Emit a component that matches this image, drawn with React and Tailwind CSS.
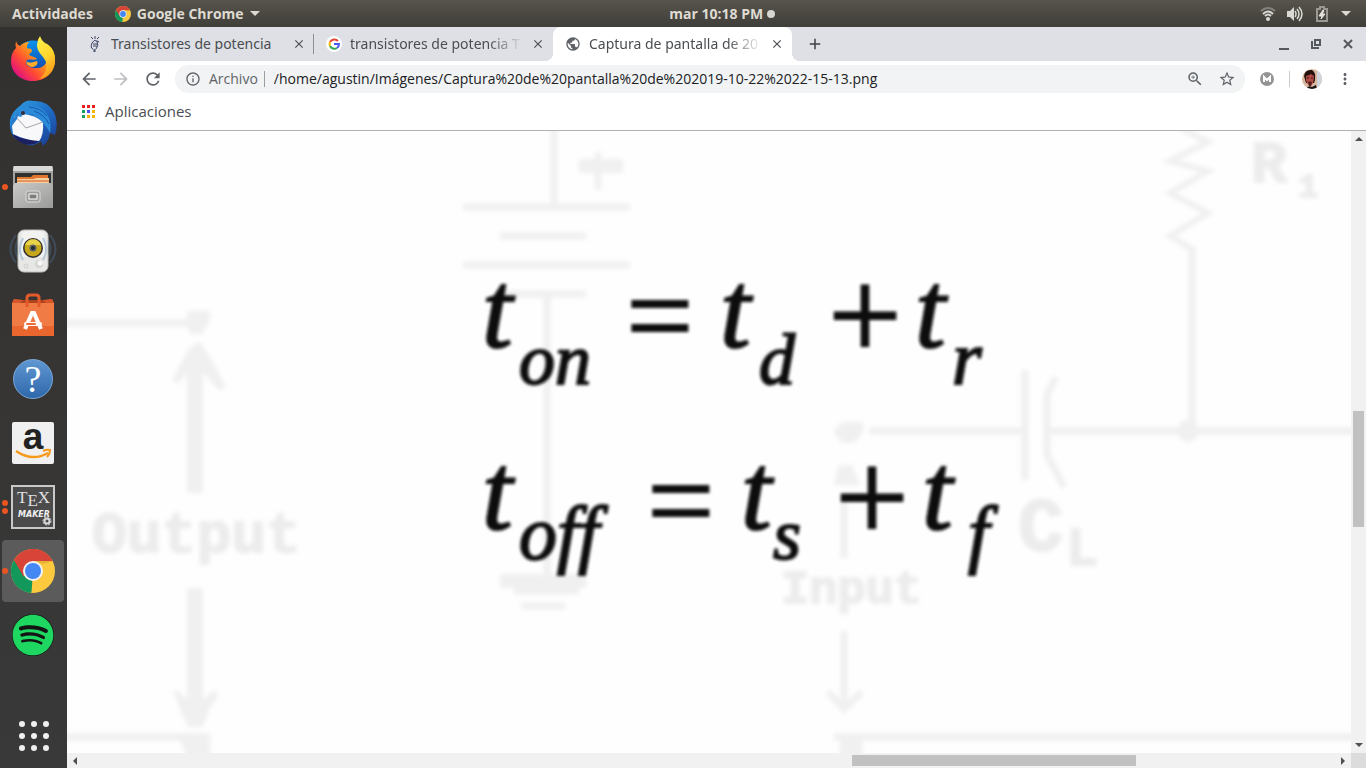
import React from 'react';
import {
  MdArrowBack,
  MdArrowForward,
  MdRefresh,
  MdInfoOutline,
  MdStarBorder,
  MdZoomIn,
  MdMoreVert,
  MdPublic,
  MdClose,
  MdAdd,
} from 'react-icons/md';
import { FaSpotify } from 'react-icons/fa';

function ChromeLogo({ className }) {
  return (
    <svg viewBox="0 0 44 44" className={className} aria-hidden="true">
      <circle cx="22" cy="22" r="22" fill="#fdc93e" />
      <path d="M22 22 L2.9 11 A22 22 0 0 0 20 43.9 L31 27Z" fill="#13985b" />
      <path d="M22 22 L12.5 27.5 L2.9 11 A22 22 0 0 1 41.7 12 L22 12Z" fill="#d84437" />
      <path d="M22 12 H41.7 L32 15Z" fill="#c9a02c" opacity=".5" />
      <path d="M22 22 L31.5 27 L20.5 44 Z" fill="#fdc93e" />
      <circle cx="22" cy="22" r="10" fill="#f3f3f3" />
      <circle cx="22" cy="22" r="8" fill="#4587f3" />
    </svg>
  );
}

function FirefoxLogo() {
  return (
    <svg viewBox="0 0 46 48" className="h-12 w-[46px]" aria-hidden="true">
      <defs>
        <linearGradient id="ffBody" x1="0.9" y1="0.1" x2="0.1" y2="0.8">
          <stop offset="0" stopColor="#ffdf2e" />
          <stop offset=".4" stopColor="#ff9a1c" />
          <stop offset=".7" stopColor="#ff4a33" />
          <stop offset="1" stopColor="#e3147f" />
        </linearGradient>
        <linearGradient id="ffGlobe" x1="0.4" y1="0" x2="0.5" y2="1">
          <stop offset="0" stopColor="#0a94f0" />
          <stop offset="1" stopColor="#133a9c" />
        </linearGradient>
        <linearGradient id="ffTail" x1="0" y1="0" x2="0.4" y2="1">
          <stop offset="0" stopColor="#fff44f" />
          <stop offset=".6" stopColor="#ffd62c" />
          <stop offset="1" stopColor="#ff9d1c" />
        </linearGradient>
      </defs>
      <circle cx="23" cy="24" r="18.500" fill="url(#ffGlobe)" />
      <path d="M6 6 Q5 10 6 13 Q1 18 1 26 C1 38 11 46 23 46 C36 46 45 37 45 25 C45 17 42 12 37 9 C40 20 38 32 28 33 C20 34 15 30 16 26 C19 23 23 26 27 24 C25 21 20 22 19 19 C23 17 22 15 21 14 C19 13 18 14 17 13 Q17 9 19 7 C15 7 12 9 10 11 Q7 10 6 6Z" fill="url(#ffBody)" />
      <path d="M30 1 Q32 7 37 9 Q45 15 45 25 C45 36 37 43 29 44 C36 39 38 32 36 27 C34 21 27 18 27 10 Q27 5 30 1Z" fill="url(#ffTail)" />
      <path d="M16 26 C20 29 23 27 27 26 Q29 30 23 32 Q17 32 16 26Z" fill="#ffab2b" />
    </svg>
  );
}

function ThunderbirdLogo() {
  return (
    <svg viewBox="0 0 48 48" className="h-12 w-12" aria-hidden="true">
      <defs>
        <linearGradient id="tbBlue" x1="0.1" y1="0" x2="0.8" y2="1">
          <stop offset="0" stopColor="#2f9fe0" />
          <stop offset=".45" stopColor="#1f6fc8" />
          <stop offset="1" stopColor="#1b3f96" />
        </linearGradient>
      </defs>
      <path d="M12 6 Q17 0 24 2 Q38 1 45 13 Q50 24 46 36 L41 34 Q40 42 34 47 L32 42 Q27 47 19 46 Q9 43 4 37 Q0 30 1 21 Q3 12 12 6Z" fill="url(#tbBlue)" />
      <path d="M3 35 L12 39 L30 42 Q24 47 15 45 Q7 42 3 35Z" fill="#1c1f60" />
      <path d="M6 17 L14 15 Q26 16 34 23 Q35 36 30 42 Q16 41 4 35 L3 27Z" fill="#f8f8fb" />
      <path d="M7 18 L17 29 L34 23" fill="none" stroke="#a4a4ac" strokeWidth="1" />
      <path d="M8 17 Q10 4 22 3 Q18 4 17 7 Q31 5 38 15 Q43 23 41 34 Q35 22 23 15 Q15 13 12 18Z" fill="#2c8bd9" />
      <path d="M20 8 Q32 9 38 17 M25 12 Q36 16 40 25" fill="none" stroke="#1557a8" strokeWidth="1" />
      <path d="M3 27 Q3 19 10 13 L8 20Z" fill="#2a7bd0" />
      <circle cx="14" cy="14" r="2" fill="#342c3d" />
    </svg>
  );
}

function FilesLogo() {
  return (
    <svg viewBox="0 0 42 44" className="h-11 w-[42px]" aria-hidden="true">
      <defs>
        <linearGradient id="cabinet" x1="0" y1="0" x2="1" y2="1">
          <stop offset="0" stopColor="#cacac8" />
          <stop offset="1" stopColor="#9a9a98" />
        </linearGradient>
      </defs>
      <path d="M1 2 Q1 1 3 1 H39 Q41 1 41 2 V43 H1Z" fill="#a2a29f" />
      <path d="M2 1 H40 L41 6 H1Z" fill="#d9d9d7" />
      <rect x="3" y="8" width="36" height="11" fill="#30302e" />
      <path d="M5 12 H19 L21 10 H36 V18 H5Z" fill="#e0762e" />
      <path d="M5 14 H22 L24 13 H37 V18 H5Z" fill="#f7cf9f" />
      <path d="M5 16 H37" stroke="#d35b20" strokeWidth="1" />
      <path d="M3 18 H39 L41 21 V42 Q41 43 39 43 H3 Q1 43 1 42 V21Z" fill="url(#cabinet)" />
      <rect x="14" y="26" width="14" height="11" rx="2" fill="#9d9d9b" stroke="#dcdcda" strokeWidth="1" />
      <rect x="17" y="29" width="8" height="5" fill="#7d7d7b" stroke="#fff" strokeWidth="1" />
    </svg>
  );
}

function RhythmboxLogo() {
  return (
    <svg viewBox="0 0 50 44" className="h-11 w-[50px]" aria-hidden="true">
      <g fill="none" stroke="#5383b8" opacity=".3">
        <path d="M8 6 Q-3 20 8 34 M42 6 Q53 20 42 34" strokeWidth="2" />
        <path d="M12 8 Q3 20 12 32 M38 8 Q47 20 38 32" strokeWidth="2" />
      </g>
      <rect x="10" y="1" width="30" height="42" rx="6" fill="#e7e7e5" stroke="#bdbdbb" strokeWidth="1" />
      <path d="M14 3 Q25 0 36 3 L38 28 H12Z" fill="#f2f2f0" />
      <path d="M15 9 Q9 20 15 31 M35 9 Q41 20 35 31" fill="none" stroke="#9db6d2" strokeWidth="2" opacity=".7" />
      <circle cx="25" cy="19" r="10" fill="#303030" />
      <circle cx="25" cy="19" r="8.500" fill="#c7a81b" />
      <path d="M17 16 A8.500 8.500 0 0 1 33 16Z" fill="#e9d148" />
      <circle cx="25" cy="19" r="3.500" fill="#5c6268" />
      <circle cx="25" cy="19" r="2" fill="#25282c" />
      <circle cx="31" cy="35" r="4" fill="#d5d5d3" />
      <circle cx="32" cy="34" r="2.500" fill="#f8f8f8" />
      <circle cx="18" cy="37" r="2" fill="none" stroke="#cfcfcd" strokeWidth="1" />
    </svg>
  );
}

function SoftwareLogo() {
  return (
    <svg viewBox="0 0 42 44" className="h-11 w-[42px]" aria-hidden="true">
      <path d="M2 6 L9 7 H33 L40 6 L42 10 H0Z" fill="#b0431b" />
      <path d="M2 6 L0 10 H8 L11 7Z M40 6 L42 10 H34 L31 7Z" fill="#d4562a" />
      <rect x="0" y="10" width="42" height="33" fill="#f07b45" />
      <rect x="0" y="33" width="42" height="10" fill="#e9662f" />
      <path d="M15 14 V5 Q15 2 18 2 H24 Q27 2 27 5 V14" fill="none" stroke="#e35a2a" strokeWidth="3" />
      <path d="M13 36 L20 20 H22 L29 36 M14 31 H28" fill="none" stroke="#fff" strokeWidth="4" />
      <rect x="12" y="29" width="18" height="4" rx="2" fill="#fff" />
      <rect x="14" y="30" width="10" height="2" rx="1" fill="#ee6d36" />
    </svg>
  );
}

function HelpLogo() {
  return (
    <span className="flex size-10 items-center justify-center rounded-full border border-[#7aa7d8] bg-linear-to-b from-[#5f97d2] to-[#2f68ab] font-['Liberation_Serif',serif] text-[38px] leading-none text-white">
      ?
    </span>
  );
}

function AmazonLogo() {
  return (
    <svg viewBox="0 0 42 42" className="size-[42px] overflow-visible" aria-hidden="true">
      <rect x="0" y="0" width="42" height="42" rx="2" fill="#f0f0f0" />
      <text x="21" y="27" textAnchor="middle" fontSize="37" fontWeight="700" fontFamily="'Liberation Sans', sans-serif" fill="#222">a</text>
      <path d="M4 29 Q20 40 36 31" fill="none" stroke="#f79a1c" strokeWidth="2.500" />
      <path d="M31 29 Q35 27 38 28 Q38 32 35 35" fill="none" stroke="#f79a1c" strokeWidth="2" />
    </svg>
  );
}

function TexmakerLogo() {
  return (
    <svg viewBox="0 0 44 44" className="size-11" aria-hidden="true">
      <rect x="1" y="1" width="42" height="42" fill="#4b4b4b" stroke="#c9c9c9" strokeWidth="2" />
      <text x="6" y="18" fontSize="17" fontFamily="'Liberation Serif', serif" fill="#e0e0e0">
        T<tspan dy="3">E</tspan><tspan dy="-3">X</tspan>
      </text>
      <text x="7" y="32" fontSize="8" fontWeight="700" fontStyle="italic" fontFamily="'DejaVu Sans', sans-serif" fill="#f0f0f0">MAKER</text>
      <circle cx="36" cy="36" r="2.500" fill="none" stroke="#d8d8d8" strokeWidth="2" />
      <circle cx="36" cy="36" r="4" fill="none" stroke="#d8d8d8" strokeWidth="1" strokeDasharray="2 1" />
    </svg>
  );
}

function SpotifyLogo() {
  return (
    <span className="flex size-[42px] items-center justify-center rounded-full bg-[#141414]">
      <FaSpotify className="size-[42px] text-[#1ed760]" />
    </span>
  );
}

const dock = [
  { name: 'Firefox', icon: <FirefoxLogo />, windows: 0 },
  { name: 'Thunderbird', icon: <ThunderbirdLogo />, windows: 0 },
  { name: 'Archivos', icon: <FilesLogo />, windows: 1 },
  { name: 'Rhythmbox', icon: <RhythmboxLogo />, windows: 0 },
  { name: 'Software de Ubuntu', icon: <SoftwareLogo />, windows: 0 },
  { name: 'Ayuda', icon: <HelpLogo />, windows: 0 },
  { name: 'Amazon', icon: <AmazonLogo />, windows: 0 },
  { name: 'Texmaker', icon: <TexmakerLogo />, windows: 2 },
  { name: 'Google Chrome', icon: <ChromeLogo className="size-11" />, windows: 1, active: true },
  { name: 'Spotify', icon: <SpotifyLogo />, windows: 0 },
];

function Dock() {
  return (
    <nav aria-label="Dock" className="flex w-[67px] shrink-0 flex-col bg-linear-to-b from-[#33312f] to-[#393939]">
      {dock.map((app) => (
        <div key={app.name} className="relative flex h-16 items-center pr-[3px] pl-[2px]">
          <button
            type="button"
            aria-label={app.name}
            className={
              app.active
                ? 'flex h-[62px] w-full items-center justify-center rounded-sm bg-[#5b5b5b]'
                : 'flex h-[62px] w-full items-center justify-center'
            }
          >
            {app.icon}
          </button>
          <span className="absolute left-[2px] flex flex-col gap-[2px]">
            {Array.from({ length: app.windows }, (_, i) => (
              <span key={i} className="size-[6px] rounded-full bg-[#e95420]" />
            ))}
          </span>
        </div>
      ))}
      <button type="button" aria-label="Mostrar aplicaciones" className="mt-auto flex h-16 items-center justify-center">
        <span className="grid grid-cols-3 gap-[6px]">
          {Array.from({ length: 9 }, (_, i) => (
            <span key={i} className="size-[6px] rounded-full bg-[#f0f0ee]" />
          ))}
        </span>
      </button>
    </nav>
  );
}

function Caret() {
  return (
    <svg viewBox="0 0 10 6" className="h-[6px] w-[10px]" aria-hidden="true">
      <path d="M0 0 H10 L5 5Z" fill="#dad9d4" />
    </svg>
  );
}

function TopBar() {
  return (
    <header className="flex h-[27px] shrink-0 items-center bg-linear-to-b from-[#57544c] to-[#403e39] text-sm font-bold text-[#dfdbd2]">
      <div className="flex basis-[49%] items-center pl-3">
        <button type="button">Actividades</button>
        <button type="button" className="ml-[22px] flex items-center gap-[6px]">
          <ChromeLogo className="size-4" />
          Google Chrome
          <Caret />
        </button>
      </div>
      <button type="button" className="flex items-center gap-1">
        mar 10:18 PM
        <span className="size-2 rounded-full bg-[#d8d6d0]" />
      </button>
      <button type="button" aria-label="Sistema" className="ml-auto flex items-center gap-[11px] pr-[15px]">
        <svg viewBox="0 0 16 16" className="size-4" fill="none" strokeWidth="2" aria-hidden="true">
          <path d="M1 5 Q8 -1 15 5" stroke="#85827b" />
          <path d="M3 8 Q8 3 13 8" stroke="#dad9d4" />
          <path d="M5 10 Q8 7 11 10" stroke="#dad9d4" />
          <circle cx="8" cy="13" r="2" fill="#dad9d4" />
        </svg>
        <svg viewBox="0 0 16 16" className="size-4" aria-hidden="true">
          <path d="M0 5 H3 L7 1 V15 L3 11 H0Z" fill="#dad9d4" />
          <path d="M8 5 Q10 8 8 11 M10 3 Q14 8 10 13 M12 1 Q18 8 12 15" fill="none" stroke="#dad9d4" strokeWidth="1.500" />
        </svg>
        <svg viewBox="0 0 12 16" className="mx-[2px] h-4 w-3" aria-hidden="true">
          <path d="M1 3 H4 V1 H8 V3 H11 V15 H1Z" fill="none" stroke="#9b9891" strokeWidth="2" />
          <path d="M7 4 L3 10 H6 L5 13 L9 8 H6 L8 5Z" fill="#e4e3df" stroke="#e4e3df" strokeWidth="1" />
        </svg>
        <Caret />
      </button>
    </header>
  );
}

function TransistorIcon() {
  return (
    <svg viewBox="0 0 16 16" className="size-4 shrink-0" fill="none" stroke="#3b4265" aria-hidden="true">
      <path d="M8 0 V3 M4 1 L6 3 M12 1 L10 3 M5 7 Q7 3 10 5 M5 7 Q3 12 6 13 M10 5 Q12 10 9 13 M7 7 V11 M9 7 V11 M7 13 V16 H8 V13 M10 5 L12 6" />
    </svg>
  );
}

function GoogleIcon() {
  return (
    <svg viewBox="0 0 16 16" className="size-4 shrink-0" fill="none" strokeWidth="2" aria-hidden="true">
      <circle cx="8" cy="8" r="8" fill="#fff" />
      <path d="M4 6 A5 5 0 0 1 12 5" stroke="#ea4335" />
      <path d="M4 10 A5 5 0 0 1 4 6" stroke="#fbbc05" />
      <path d="M4 10 A5 5 0 0 0 11 12" stroke="#34a853" />
      <path d="M11 12 A5 5 0 0 0 13 8 H8" stroke="#4a5cf0" />
    </svg>
  );
}

const tabs = [
  { title: 'Transistores de potencia', icon: <TransistorIcon /> },
  { title: 'transistores de potencia T', icon: <GoogleIcon />, fade: true },
  { title: 'Captura de pantalla de 20', icon: <MdPublic className="size-4 shrink-0 text-[#5f6368]" />, fade: true, active: true },
];

function TabStrip() {
  return (
    <div className="flex h-[34px] shrink-0 items-stretch bg-[#dee0e5] pl-2 text-[#4a4d51]">
      {tabs.map((tab, i) => (
        <div
          key={tab.title}
          className={
            tab.active
              ? 'relative flex w-[239px] items-center gap-2 rounded-t-lg bg-white pr-2 pl-3'
              : 'relative flex w-[239px] items-center gap-2 pr-2 pl-3'
          }
        >
          {tab.icon}
          <button
            type="button"
            className={
              tab.fade
                ? "min-w-0 flex-1 overflow-hidden mask-r-from-80% mask-r-to-100% text-left font-['Noto_Sans',sans-serif] text-sm whitespace-nowrap"
                : "min-w-0 flex-1 overflow-hidden text-left font-['Noto_Sans',sans-serif] text-sm whitespace-nowrap"
            }
          >
            {tab.title}
          </button>
          <button type="button" aria-label={'Cerrar ' + tab.title} className="shrink-0">
            <MdClose className="size-[14px]" />
          </button>
          {i === 0 && <span className="absolute right-0 h-5 w-px bg-[#8b8e93]" />}
          {tab.active && (
            <>
              <span className="absolute bottom-0 -left-2 size-2 bg-[radial-gradient(circle_at_0_0,transparent_8px,white_8px)]" />
              <span className="absolute -right-2 bottom-0 size-2 bg-[radial-gradient(circle_at_100%_0,transparent_8px,white_8px)]" />
            </>
          )}
        </div>
      ))}
      <button type="button" aria-label="Pestaña nueva" className="ml-[14px] flex items-center">
        <MdAdd className="size-[18px] text-[#3c4043]" />
      </button>
      <div className="ml-auto flex items-center gap-5 pr-3 text-[#55585d]">
        <button type="button" aria-label="Minimizar" className="flex h-3 w-3 items-end justify-center">
          <span className="h-[2px] w-[10px] bg-[#55585d]" />
        </button>
        <button type="button" aria-label="Restaurar">
          <svg viewBox="0 0 12 12" className="size-3" fill="none" stroke="currentColor" strokeWidth="2" aria-hidden="true">
            <path d="M5 2 H10 V7 H5Z M2 3 V10 H9" />
          </svg>
        </button>
        <button type="button" aria-label="Cerrar">
          <svg viewBox="0 0 12 12" className="size-3" stroke="currentColor" strokeWidth="2" aria-hidden="true">
            <path d="M2 2 L10 10 M10 2 L2 10" />
          </svg>
        </button>
      </div>
    </div>
  );
}

function Avatar() {
  return (
    <svg viewBox="0 0 20 20" className="size-5" aria-hidden="true">
      <clipPath id="avatarClip"><circle cx="10" cy="10" r="10" /></clipPath>
      <g clipPath="url(#avatarClip)">
        <rect width="20" height="20" fill="#d9b8a0" />
        <rect x="15" width="5" height="20" fill="#cfd3dc" />
        <path d="M2 7 Q3 0 10 1 Q14 3 13 11 L12 14 H4Z" fill="#24100f" />
        <path d="M4 7 L7 6 L9 5 L12 7 Q12 14 9 17 Q5 16 4 11Z" fill="#b04a45" />
        <path d="M6 13 Q8 12 10 13 L9 17 H7Z" fill="#571d1c" />
        <path d="M4 20 Q6 16 10 18 L14 16 L15 20Z" fill="#191516" />
        <path d="M5 9 H7 M9 9 H11" stroke="#3a1110" strokeWidth="1" />
      </g>
    </svg>
  );
}

function Toolbar() {
  return (
    <div className="flex h-9 shrink-0 items-center bg-white px-3 text-[#5f6368]">
      <div className="flex items-center gap-3">
        <button type="button" aria-label="Atrás"><MdArrowBack className="size-5" /></button>
        <button type="button" aria-label="Adelante"><MdArrowForward className="size-5 text-[#bcbec1]" /></button>
        <button type="button" aria-label="Recargar"><MdRefresh className="size-5" /></button>
      </div>
      <div className="ml-3 flex h-7 flex-1 items-center rounded-full bg-[#f1f3f4] pr-[9px] pl-[10px]">
        <MdInfoOutline className="size-4" />
        <label htmlFor="url" className="ml-2 text-sm">Archivo</label>
        <span className="mr-[9px] ml-[6px] h-4 w-px bg-[#9a9da1]" />
        <input
          id="url"
          type="text"
          className="min-w-0 flex-1 bg-transparent text-sm text-[#202124] outline-none"
          defaultValue="/home/agustin/Imágenes/Captura%20de%20pantalla%20de%202019-10-22%2022-15-13.png"
        />
        <button type="button" aria-label="Zoom"><MdZoomIn className="size-[18px]" /></button>
        <button type="button" aria-label="Marcar" className="ml-[14px]"><MdStarBorder className="size-[18px]" /></button>
      </div>
      <button type="button" aria-label="Extensión MEGA" className="ml-[15px]">
        <svg viewBox="0 0 14 14" className="size-[14px]" aria-hidden="true">
          <circle cx="7" cy="7" r="7" fill="#949494" />
          <path d="M4 10 V5 L7 8 L10 5 V10" fill="none" stroke="#fff" strokeWidth="2" />
        </svg>
      </button>
      <span className="ml-[15px] h-4 w-px bg-[#c9cbce]" />
      <button type="button" aria-label="Perfil" className="ml-3"><Avatar /></button>
      <button type="button" aria-label="Menú" className="ml-[14px]"><MdMoreVert className="size-[18px]" /></button>
    </div>
  );
}

const appDots = [
  'bg-[#ea1c1c]', 'bg-[#ea1c1c]', 'bg-[#ea1c1c]',
  'bg-[#12a05c]', 'bg-[#4a53e8]', 'bg-[#f4b400]',
  'bg-[#12a05c]', 'bg-[#f4b400]', 'bg-[#f4b400]',
];

function BookmarksBar() {
  return (
    <div className="flex h-[34px] shrink-0 items-center border-b border-[#b1b1b1] bg-white pb-1 pl-[15px]">
      <button type="button" className="flex items-center gap-[10px] text-[15px] text-[#4a4d51]">
        <span className="grid grid-cols-3 gap-[2px]">
          {appDots.map((color, i) => (
            <span key={i} className={'size-[3px] ' + color} />
          ))}
        </span>
        Aplicaciones
      </button>
    </div>
  );
}

function FormulaPicture() {
  return (
    <svg
      viewBox="67 131 1284 622"
      preserveAspectRatio="xMinYMin slice"
      className="absolute inset-0 h-full w-full"
      role="img"
      aria-label="Fórmulas de los tiempos de conmutación"
    >
      <defs>
        <filter id="soften" x="-5%" y="-5%" width="110%" height="110%">
          <feGaussianBlur stdDeviation="2" />
        </filter>
        <filter id="softenInk" x="-5%" y="-5%" width="110%" height="110%">
          <feGaussianBlur stdDeviation="1.500" />
        </filter>
      </defs>
      <rect x="67" y="131" width="1284" height="622" fill="#fefefe" />

      <g filter="url(#soften)" stroke="#f0f0f0" strokeWidth="7" fill="none">
        <path d="M554 120 V204 M463 207 H630 M500 236 H586 M463 265 H630 M500 294 H586 M547 297 V575" />
        <path d="M579 166 H623" strokeWidth="14" />
        <path d="M598 152 V190" />
        <path d="M500 581 H586" strokeWidth="14" />
        <path d="M514 591 H579 M521 606 H565" />

        <path d="M55 323 H195 M55 737 H205" />
        <path d="M195 350 V493 M195 588 V722" strokeWidth="16" />
        <g fill="#f0f0f0" stroke="none">
          <path d="M187 311 H210 V320 L202 334 H190 L187 325Z" />
          <path d="M199 341 L210 357 L218 371 L226 388 L219 390 L204 374 H187 L177 384 L172 380 L188 350Z" />
          <path d="M173 690 L180 692 L187 700 H203 L213 690 L219 694 L209 710 L203 727 H188 L180 710Z" />
          <path d="M180 740 V733 H210 V760 H188Z" />
          <path d="M833 431 L842 422 H863 V432 L854 443 H842Z" />
          <path d="M834 485 L838 466 L852 465 L860 485Z" />
          <path d="M840 735 H862 V760 H840Z" />
          <circle cx="1188" cy="431" r="11" />
        </g>

        <path d="M1181 128 L1208 142 L1170 161 L1208 171 L1170 193 L1208 213 L1170 236 L1190 248" strokeWidth="6" />
        <path d="M1192 246 V430" />
        <path d="M869 431 H1022 M1045 431 H1360 M1025 370 V480 M1056 377 L1047 395 V455 L1064 487" />
        <path d="M844 498 V558 M844 631 V706 M828 692 L844 709 L862 692 M834 737 H1360" />
      </g>

      <g filter="url(#soften)" fill="#ececec" stroke="#ececec" strokeWidth="2" fontFamily="'Liberation Mono', monospace" fontWeight="700">
        <text x="92" y="552" fontSize="58">Output</text>
        <text x="781" y="603" fontSize="47">Input</text>
        <text x="1018" y="550" fontSize="76">C</text>
        <text x="1066" y="565" fontSize="54">L</text>
        <text x="1251" y="182" fontSize="60">R</text>
        <text x="1298" y="197" fontSize="34">1</text>
      </g>

      <g
        filter="url(#softenInk)"
        fill="#0c0c0c"
        stroke="#0c0c0c"
        strokeWidth="2"
        fontFamily="'Liberation Serif', serif"
        fontStyle="italic"
        fontSize="110"
      >
        <text y="347">
          <tspan x="482">t</tspan>
          <tspan x="519" y="384" fontSize="72">on</tspan>
          <tspan x="619" y="356" fontSize="118">=</tspan>
          <tspan x="720" y="347">t</tspan>
          <tspan x="759" y="384" fontSize="72">d</tspan>
          <tspan x="820" y="359" fontSize="130">+</tspan>
          <tspan x="915" y="347">t</tspan>
          <tspan x="952" y="384" fontSize="76">r</tspan>
        </text>
        <text y="529">
          <tspan x="482">t</tspan>
          <tspan x="519" y="559" fontSize="76">off</tspan>
          <tspan x="640" y="541" fontSize="118">=</tspan>
          <tspan x="741" y="529">t</tspan>
          <tspan x="773" y="559" fontSize="72">s</tspan>
          <tspan x="827" y="541" fontSize="130">+</tspan>
          <tspan x="922" y="529">t</tspan>
          <tspan x="968" y="559" fontSize="76">f</tspan>
        </text>
      </g>
    </svg>
  );
}

function Arrow({ d }) {
  return (
    <svg viewBox="0 0 8 8" className="size-2" aria-hidden="true">
      <path d={d} fill="#505050" />
    </svg>
  );
}

function VerticalScrollbar() {
  return (
    <div className="flex w-[15px] shrink-0 flex-col items-center bg-[#f1f1f1]">
      <button type="button" aria-label="Desplazar arriba" className="flex h-4 items-center"><Arrow d="M0 6 H8 L4 2Z" /></button>
      <div className="grow-[264]" />
      <div className="w-[11px] grow-[116] bg-[#c1c1c1]" />
      <div className="grow-[210]" />
      <button type="button" aria-label="Desplazar abajo" className="flex h-4 items-center"><Arrow d="M0 2 H8 L4 6Z" /></button>
    </div>
  );
}

function HorizontalScrollbar() {
  return (
    <div className="flex h-[15px] shrink-0 bg-[#f1f1f1]">
      <div className="flex flex-1 items-center">
        <button type="button" aria-label="Desplazar a la izquierda" className="flex w-4 justify-center"><Arrow d="M6 0 V8 L2 4Z" /></button>
        <div className="grow-[769]" />
        <div className="h-[11px] grow-[284] bg-[#c1c1c1]" />
        <div className="grow-[199]" />
        <button type="button" aria-label="Desplazar a la derecha" className="flex w-4 justify-center"><Arrow d="M2 0 V8 L6 4Z" /></button>
      </div>
      <div className="w-[15px] bg-[#dcdcdc]" />
    </div>
  );
}

export default function App() {
  return (
    <div className="flex h-screen flex-col overflow-hidden font-['Open_Sans','Noto_Sans',sans-serif]">
      <TopBar />
      <div className="flex min-h-0 flex-1">
        <Dock />
        <section className="flex min-w-0 flex-1 flex-col bg-white">
          <TabStrip />
          <Toolbar />
          <BookmarksBar />
          <div className="flex min-h-0 flex-1">
            <main className="relative min-w-0 flex-1 overflow-hidden">
              <FormulaPicture />
            </main>
            <VerticalScrollbar />
          </div>
          <HorizontalScrollbar />
        </section>
      </div>
    </div>
  );
}
